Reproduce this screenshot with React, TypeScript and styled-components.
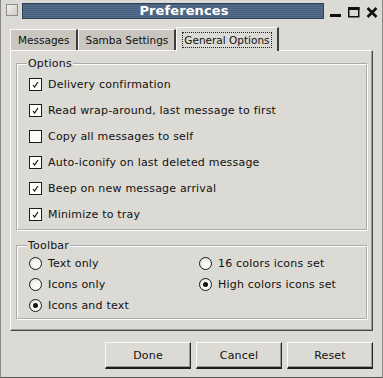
import { createGlobalStyle } from 'styled-components'
import styled from 'styled-components'

const GlobalStyle = createGlobalStyle`
  html, body {
    margin: 0;
    padding: 0;
    background: #dcdad4;
  }
  body {
    font-family: "DejaVu Sans", Verdana, sans-serif;
    font-size: 11px;
    letter-spacing: 0.2px;
    color: #111;
  }
`

const Window = styled.div`
  box-sizing: border-box;
  width: 383px;
  height: 378px;
  display: flex;
  flex-direction: column;
  background: #dcdad4;
  border-left: 1px solid #8a8883;
  border-right: 1px solid #8a8883;
  border-bottom: 1px solid #55534f;
`

const TitleBar = styled.div`
  display: flex;
  align-items: flex-start;
  height: 21px;
  padding: 3px 4px 0 5px;
  box-sizing: border-box;
`

const MenuBox = styled.div`
  width: 10px;
  height: 10px;
  margin-top: 1px;
  border: 1px solid #8e8c88;
  background: linear-gradient(135deg, #f4f3f0, #cfccc6);
`

const TitleBand = styled.div`
  flex: 1;
  height: 16px;
  margin: 0 6px 0 4px;
  padding-left: 22px;
  box-sizing: border-box;
  border: 1px solid #2f4156;
  background: repeating-linear-gradient(
    to bottom,
    #47607d 0px,
    #47607d 1px,
    #536d8b 1px,
    #536d8b 2px
  );
  color: #fff;
  font-weight: bold;
  font-size: 13px;
  line-height: 14px;
  text-align: center;
  letter-spacing: 0.1px;
`

const WinButtons = styled.div`
  display: flex;
  gap: 6px;
  margin-top: 4px;
`

const Body = styled.div`
  display: flex;
  flex-direction: column;
  padding: 6px 9px 0 9px;
`

const TabRow = styled.div`
  display: flex;
  align-items: flex-end;
  height: 23px;
`

const Tab = styled.div<{ $active?: boolean }>`
  box-sizing: border-box;
  height: ${(p) => (p.$active ? '24px' : '21px')};
  padding: 0 ${(p) => (p.$active ? '5px' : '4px')} 0 5px;
  display: flex;
  align-items: center;
  font-size: 10.5px;
  letter-spacing: 0;
  background: ${(p) => (p.$active ? '#dcdad4' : '#c9c6bf')};
  border-top: 1px solid #fbfaf8;
  border-left: 1px solid #fbfaf8;
  border-right: 2px solid #3d3c39;
  position: relative;
  ${(p) => p.$active && `
    margin-bottom: -1px;
    z-index: 1;
  `}
`

const TabLabel = styled.span<{ $focus?: boolean }>`
  padding: 1px 1px 0;
  border: 1px dotted ${(p) => (p.$focus ? '#222' : 'transparent')};
  line-height: 13px;
`

const Panel = styled.div`
  box-sizing: border-box;
  height: 281px;
  border-top: 1px solid #fbfaf8;
  border-left: 1px solid #fbfaf8;
  border-right: 1px solid #4a4946;
  border-bottom: 1px solid #4a4946;
  box-shadow: inset -1px -1px 0 #a09e98;
  padding: 6px 4px 0 5px;
  display: flex;
  flex-direction: column;
`

const GroupBox = styled.fieldset<{ $gap?: string }>`
  margin: 0 0 ${(p) => p.$gap || '0'} 0;
  padding: 1px 8px 2px 11px;
  border: 2px groove #ffffff;
  min-inline-size: 0;
`

const Legend = styled.legend`
  padding: 0 1px;
  margin-left: -2px;
  line-height: 13px;
`

const CheckRow = styled.label`
  display: flex;
  align-items: center;
  height: 26px;
  gap: 6px;
`

const CheckBox = styled.span`
  box-sizing: border-box;
  width: 13px;
  height: 13px;
  border: 1px solid #1c1c1c;
  background: #fdfdfc;
  display: flex;
  align-items: center;
  justify-content: center;
`

const RadioGrid = styled.div`
  display: grid;
  grid-template-columns: 170px 1fr;
  grid-auto-rows: 21px;
`

const RadioRow = styled.label<{ $col: number; $row: number }>`
  grid-column: ${(p) => p.$col};
  grid-row: ${(p) => p.$row};
  display: flex;
  align-items: center;
  gap: 6px;
`

const Radio = styled.span`
  box-sizing: border-box;
  width: 13px;
  height: 13px;
  border-radius: 50%;
  border: 1px solid #1c1c1c;
  background: radial-gradient(circle at 60% 65%, #ffffff 0%, #f2f1ee 55%, #c9c7c2 100%);
  display: flex;
  align-items: center;
  justify-content: center;
`

const Dot = styled.span`
  width: 5px;
  height: 5px;
  border-radius: 50%;
  background: #111;
`

const ButtonRow = styled.div`
  display: flex;
  justify-content: flex-end;
  gap: 5px;
  margin-top: 11px;
`

const Button = styled.button`
  box-sizing: border-box;
  width: 86px;
  height: 27px;
  font-family: inherit;
  font-size: 11px;
  letter-spacing: 0.2px;
  color: #111;
  background: #dcdad4;
  border-top: 1px solid #fbfaf8;
  border-left: 1px solid #fbfaf8;
  border-right: 1px solid #2a2927;
  border-bottom: 2px solid #1e1d1b;
  box-shadow: inset -1px -1px 0 #9c9a94;
  padding: 0;
`

function Check() {
  return (
    <svg width="9" height="9" viewBox="0 0 9 9">
      <path d="M2 5 L3.6 7 L7 2" fill="none" stroke="#111" strokeWidth="1.2" />
    </svg>
  )
}

const options = [
  { label: 'Delivery confirmation', checked: true },
  { label: 'Read wrap-around, last message to first', checked: true },
  { label: 'Copy all messages to self', checked: false },
  { label: 'Auto-iconify on last deleted message', checked: true },
  { label: 'Beep on new message arrival', checked: true },
  { label: 'Minimize to tray', checked: true },
]

const radios = [
  { label: 'Text only', col: 1, row: 1, on: false },
  { label: 'Icons only', col: 1, row: 2, on: false },
  { label: 'Icons and text', col: 1, row: 3, on: true },
  { label: '16 colors icons set', col: 2, row: 1, on: false },
  { label: 'High colors icons set', col: 2, row: 2, on: true },
]

export default function App() {
  return (
    <>
      <GlobalStyle />
      <Window>
        <TitleBar>
          <MenuBox />
          <TitleBand>Preferences</TitleBand>
          <WinButtons>
            <svg width="12" height="11" viewBox="0 0 12 11">
              <rect x="0" y="7" width="11" height="3" fill="#111" />
            </svg>
            <svg width="12" height="11" viewBox="0 0 12 11">
              <rect x="0.75" y="0.75" width="10" height="9" fill="none" stroke="#111" strokeWidth="1.5" />
              <rect x="0" y="0" width="11.5" height="3" fill="#111" />
            </svg>
            <svg width="12" height="11" viewBox="0 0 12 11">
              <path d="M1.5 1 L10.5 10 M10.5 1 L1.5 10" stroke="#111" strokeWidth="2.6" />
            </svg>
          </WinButtons>
        </TitleBar>
        <Body>
          <TabRow>
            <Tab>
              <TabLabel>Messages</TabLabel>
            </Tab>
            <Tab>
              <TabLabel>Samba Settings</TabLabel>
            </Tab>
            <Tab $active>
              <TabLabel $focus>General Options</TabLabel>
            </Tab>
          </TabRow>
          <Panel>
            <GroupBox $gap="8px">
              <Legend>Options</Legend>
              {options.map((o) => (
                <CheckRow key={o.label}>
                  <CheckBox>{o.checked && <Check />}</CheckBox>
                  {o.label}
                </CheckRow>
              ))}
            </GroupBox>
            <GroupBox>
              <Legend>Toolbar</Legend>
              <RadioGrid>
                {radios.map((r) => (
                  <RadioRow key={r.label} $col={r.col} $row={r.row}>
                    <Radio>{r.on && <Dot />}</Radio>
                    {r.label}
                  </RadioRow>
                ))}
              </RadioGrid>
            </GroupBox>
          </Panel>
          <ButtonRow>
            <Button>Done</Button>
            <Button>Cancel</Button>
            <Button>Reset</Button>
          </ButtonRow>
        </Body>
      </Window>
    </>
  )
}
